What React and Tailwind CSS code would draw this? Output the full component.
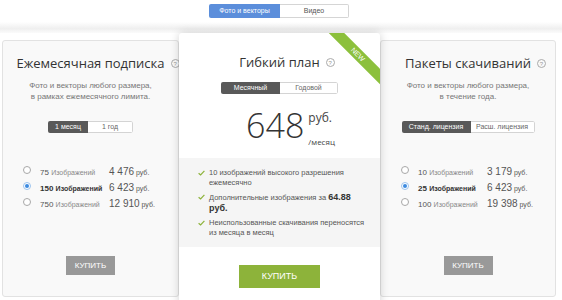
import React from "react";

const sans = { fontFamily: '"Liberation Sans", Arial, sans-serif' };
const open = { fontFamily: '"Open Sans", "Liberation Sans", sans-serif' };

function Help() {
  return (
    <span
      className="absolute left-full top-[7px] ml-[6px] flex items-center justify-center w-[9px] h-[9px] rounded-full border border-[#aaa] text-[#999] text-[6px] leading-none"
      style={sans}
    >
      ?
    </span>
  );
}

function Title({ children, className }) {
  return (
    <div className={`text-[13px] leading-[22px] text-[#333] whitespace-nowrap ${className}`} style={open}>
      <span className="relative inline-block">
        {children}
        <Help />
      </span>
    </div>
  );
}

function Toggle({ a, b, wa, wb }) {
  return (
    <div className="flex h-[12px] text-[7px] leading-[12px] rounded-[2px] overflow-hidden" style={sans}>
      <div className={`bg-[#595959] text-white text-center ${wa}`}>{a}</div>
      <div className={`bg-white text-[#666] text-center border border-l-0 border-[#d4d4d4] rounded-r-[2px] leading-[10px] ${wb}`}>{b}</div>
    </div>
  );
}

function Radio({ checked }) {
  return checked ? (
    <span className="w-[8px] h-[8px] rounded-full border border-[#9cc3ee] bg-white flex items-center justify-center shrink-0">
      <span className="w-[4px] h-[4px] rounded-full bg-[#3d8be0]" />
    </span>
  ) : (
    <span className="w-[8px] h-[8px] rounded-full border border-[#a8a8a8] bg-white shrink-0" />
  );
}

function Rows({ rows }) {
  return (
    <div className="self-start pl-[20px] mt-[29px]" style={sans}>
      {rows.map((r, i) => (
        <div key={i} className="flex items-center h-[16px]">
          <Radio checked={r.checked} />
          <div className="ml-[9px] w-[69px] whitespace-nowrap">
            {r.checked ? (
              <span className="font-bold text-[#333]">
                <span className="text-[8px]">{r.n} </span>
                <span className="text-[7px]">Изображений</span>
              </span>
            ) : (
              <>
                <span className="text-[8px] text-[#555]">{r.n} </span>
                <span className="text-[7px] text-[#888]">Изображений</span>
              </>
            )}
          </div>
          <div className="whitespace-nowrap text-[#555]">
            <span className="text-[10px]">{r.p}</span>
            <span className="text-[7px]"> руб.</span>
          </div>
        </div>
      ))}
    </div>
  );
}

function SideCard({ title, sub, toggle, rows }) {
  return (
    <div className="mt-[7px] h-[257px] bg-[#f9f9f9] border border-[#e2e2e2] rounded-[3px] flex flex-col items-center">
      <Title className="pt-[11px]">{title}</Title>
      <div className="mt-[6px] text-[8px] leading-[11px] text-[#777] text-center" style={sans}>
        {sub.map((s, i) => (
          <div key={i}>{s}</div>
        ))}
      </div>
      <div className="mt-[19px]">{toggle}</div>
      <Rows rows={rows} />
      <div
        className="mt-[46px] w-[49px] h-[19px] bg-[#999999] text-white text-[8px] leading-[19px] text-center"
        style={sans}
      >
        КУПИТЬ
      </div>
    </div>
  );
}

function Check() {
  return (
    <svg width="7" height="6" viewBox="0 0 7 6" className="shrink-0 mt-[2px]">
      <path d="M0.6 3.2 L2.6 5 L6.4 0.8" fill="none" stroke="#8db33a" strokeWidth="1.2" />
    </svg>
  );
}

export default function App() {
  return (
    <div className="w-[562px] h-[300px] overflow-hidden bg-white relative">
      <div className="h-[22px] flex justify-center pt-[4px]">
        <div className="flex h-[14px] text-[7px] leading-[14px] ml-[-4px]" style={sans}>
          <div className="w-[71px] bg-[#5b8edb] text-white text-center rounded-l-[2px]">Фото и векторы</div>
          <div className="w-[69px] bg-white text-[#555] text-center border border-l-0 border-[#d5d5d5] rounded-r-[2px] leading-[12px]">
            Видео
          </div>
        </div>
      </div>
      <div className="h-[11px] bg-[linear-gradient(to_bottom,#ffffff,#efefef_60%,#fbfbfb)]" />
      <div className="flex items-start">
        <div className="ml-[2px] w-[177px]">
          <SideCard
            title="Ежемесячная подписка"
            sub={["Фото и векторы любого размера,", "в рамках ежемесячного лимита."]}
            toggle={<Toggle a="1 месяц" b="1 год" wa="w-[40px]" wb="w-[45px]" />}
            rows={[
              { n: "75", p: "4 476" },
              { n: "150", p: "6 423", checked: true },
              { n: "750", p: "12 910" },
            ]}
          />
        </div>
        <div className="w-[201px] h-[275px] bg-white relative z-10 shadow-[0_0_10px_rgba(0,0,0,0.18)] rounded-t-[3px] flex flex-col items-center">
          <div className="absolute top-0 right-0 w-[56px] h-[56px] overflow-hidden">
            <div
              className="absolute left-[-6px] top-[16px] w-[80px] h-[11px] bg-[#8cc03c] rotate-45 text-white text-[7px] leading-[11px] text-center"
              style={sans}
            >
              NEW
            </div>
          </div>
          <Title className="pt-[18px]">Гибкий план</Title>
          <div className="mt-[9px]">
            <Toggle a="Месячный" b="Годовой" wa="w-[59px]" wb="w-[58px]" />
          </div>
          <div className="mt-[13px] h-[40px] flex items-start ml-[22px]">
            <div className="text-[34px] leading-[36px] font-light text-[#333]" style={open}>
              648
            </div>
            <div className="ml-[4px] flex flex-col text-[#444]" style={open}>
              <span className="text-[12px] leading-[14px] mt-[4px]">руб.</span>
              <span className="text-[8px] leading-[10px] mt-[12px]">/месяц</span>
            </div>
          </div>
          <div className="mt-[11px] w-full bg-[#f5f5f5] pt-[10px] pb-[9px] pl-[19px] pr-[12px] flex flex-col gap-[4px] text-[7.5px] leading-[10px] text-[#555]" style={sans}>
            <div className="flex gap-[4px]">
              <Check />
              <div>10 изображений высокого разрешения ежемесячно</div>
            </div>
            <div className="flex gap-[4px]">
              <Check />
              <div>
                Дополнительные изображения за{" "}
                <b className="text-[9px] leading-[10px] text-[#333]">64.88 руб.</b>
              </div>
            </div>
            <div className="flex gap-[4px]">
              <Check />
              <div>Неиспользованные скачивания переносятся из месяца в месяц</div>
            </div>
          </div>
          <div
            className="mt-[18px] w-[81px] h-[23px] bg-[#8db33a] text-white text-[9px] leading-[23px] text-center"
            style={sans}
          >
            КУПИТЬ
          </div>
        </div>
        <div className="w-[176px]">
          <SideCard
            title="Пакеты скачиваний"
            sub={["Фото и векторы любого размера,", "в течение года."]}
            toggle={<Toggle a="Станд. лицензия" b="Расш. лицензия" wa="w-[69px]" wb="w-[64px]" />}
            rows={[
              { n: "10", p: "3 179" },
              { n: "25", p: "6 423", checked: true },
              { n: "100", p: "19 398" },
            ]}
          />
        </div>
      </div>
    </div>
  );
}
